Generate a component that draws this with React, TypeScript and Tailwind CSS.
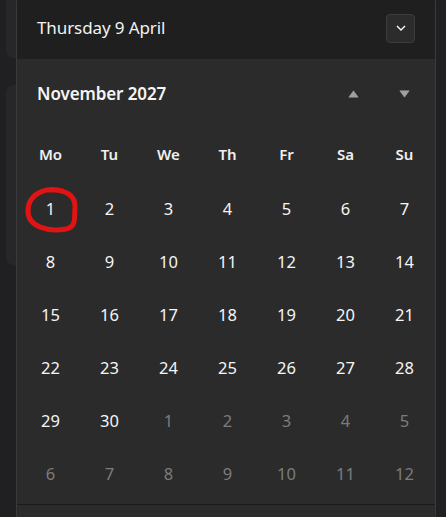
import React from "react";

const font = { fontFamily: '"Noto Sans", "Open Sans", Arial, sans-serif' };

type Day = { n: number; cur: boolean };

function buildDays(): Day[] {
  const days: Day[] = [];
  for (let i = 1; i <= 30; i++) days.push({ n: i, cur: true });
  for (let i = 1; i <= 12; i++) days.push({ n: i, cur: false });
  return days;
}

export default function App() {
  const days = buildDays();
  const weekdays = ["Mo", "Tu", "We", "Th", "Fr", "Sa", "Su"];
  return (
    <div className="relative w-[446px] h-[517px] overflow-hidden bg-[#202023]" style={font}>
      {/* background window content */}
      <div className="flex flex-col gap-[27px] pl-[6px]">
        <div className="w-[60px] h-[68px] -mt-[10px] rounded-b-[8px] bg-[#27272a]" />
        <div className="w-[60px] h-[180px] rounded-[8px] bg-[#27272a]" />
      </div>

      {/* flyout */}
      <div className="absolute left-[16px] top-[-6px] w-[420px] h-[560px] rounded-[8px] border border-[#3a3a3c] bg-[#2b2b2b] overflow-hidden">
        <div className="h-[64px] pt-[2px] bg-[#1f1f1f] flex items-center justify-between pl-[20px] pr-[20px]">
          <span className="text-[17px] text-[#f2f2f2] tracking-[-0.1px]">Thursday 9 April</span>
          <div className="w-[29px] h-[29px] rounded-[4px] bg-[#2c2c2c] border border-[#3c3c3c] flex items-center justify-center">
            <svg width="10" height="6" viewBox="0 0 10 6">
              <path d="M1 1 L5 5 L9 1" fill="none" stroke="#ffffff" strokeWidth="1.3" />
            </svg>
          </div>
        </div>
        <div className="h-[70px] flex items-center justify-between pl-[20px] pr-[5px]">
          <span className="text-[17px] font-semibold text-[#f5f5f5] tracking-[-0.1px]">November 2027</span>
          <div className="flex">
            <div className="w-[51px] h-[30px] flex items-center justify-center">
              <svg width="11" height="8" viewBox="0 0 11 8">
                <path d="M5.5 0.8 L10.2 7.2 L0.8 7.2 Z" fill="#a0a0a0" stroke="#a0a0a0" strokeWidth="0.6" strokeLinejoin="round" />
              </svg>
            </div>
            <div className="w-[51px] h-[30px] flex items-center justify-center">
              <svg width="11" height="8" viewBox="0 0 11 8">
                <path d="M0.8 0.8 L10.2 0.8 L5.5 7.2 Z" fill="#a0a0a0" stroke="#a0a0a0" strokeWidth="0.6" strokeLinejoin="round" />
              </svg>
            </div>
          </div>
        </div>
        <div className="pl-[4px] w-[417px]">
          <div className="grid grid-cols-7 w-[413px] h-[54px] pb-[3px] items-center">
            {weekdays.map((w) => (
              <div key={w} className="text-center text-[15px] font-semibold text-[#f0f0f0]">{w}</div>
            ))}
          </div>
          <div className="grid grid-cols-7 w-[413px] auto-rows-[53px]">
            {days.map((d, i) => (
              <div
                key={i}
                className={
                  "flex items-center justify-center text-[16.5px] " +
                  (d.cur ? "text-[#f5f5f5]" : "text-[#7c7c7c]")
                }
              >
                {d.n}
              </div>
            ))}
          </div>
        </div>
        <div className="mt-[3px] border-t border-[#1a1a1a] h-[40px] bg-[#2b2b2b]" />
      </div>

      {/* red annotation */}
      <svg className="absolute left-0 top-0 pointer-events-none" width="446" height="517">
        <path
          d="M62 191 C46 186, 28 194, 28 211 C28 227, 48 232, 66 229 C77 227, 74 217, 75 208 C76 196, 66 189, 50 190"
          fill="none"
          stroke="#e01414"
          strokeWidth="5"
          strokeLinecap="round"
        />
      </svg>
    </div>
  );
}
